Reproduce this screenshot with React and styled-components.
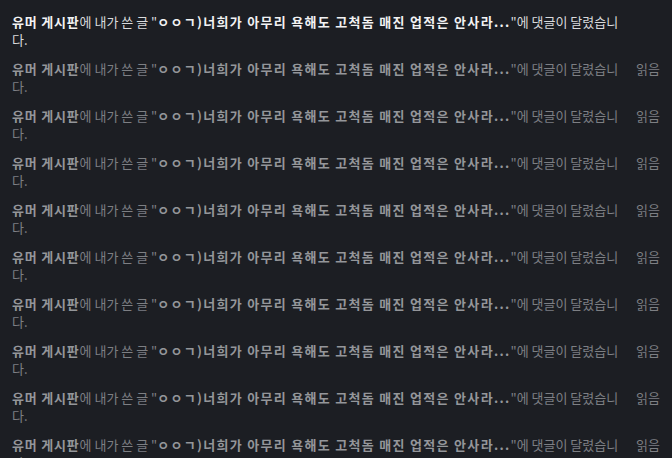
import React from "react";
import styled, { createGlobalStyle } from "styled-components";

const GlobalStyle = createGlobalStyle`
  html, body {
    margin: 0;
    padding: 0;
    background: #1c1e23;
  }
  body {
    font-family: "Noto Sans CJK KR", "Noto Sans", sans-serif;
    font-size: 13px;
  }
`;

const List = styled.ul`
  list-style: none;
  margin: 0;
  padding: 7px 0 0;
  width: 672px;
  height: 458px;
  overflow: hidden;
  box-sizing: border-box;
`;

const Item = styled.li`
  display: grid;
  grid-template-columns: 1fr 26px;
  column-gap: 8px;
  padding: 6px 12px 5px;
  line-height: 18px;
  color: ${({ $read }) => ($read ? "#7d7f83" : "#d9dadc")};
`;

const Message = styled.p`
  margin: 0;
  word-break: break-all;
`;

const Strong = styled.b`
  font-weight: 700;
  letter-spacing: ${({ $wide }) => ($wide ? "1.3px" : "0.8px")};
  color: ${({ $read }) => ($read ? "#94969a" : "#f2f2f3")};
`;

const Status = styled.span`
  color: #7d7f83;
  white-space: nowrap;
  text-align: right;
`;

const notifications = [
  { id: 1, read: false },
  ...Array.from({ length: 9 }, (_, i) => ({ id: i + 2, read: true })),
];

const Notification = ({ read }) => (
  <Item $read={read}>
    <Message>
      <Strong $read={read}>유머 게시판</Strong>에 내가 쓴 글 "
      <Strong $read={read} $wide>
        ㅇㅇㄱ)너희가 아무리 욕해도 고척돔 매진 업적은 안사라...
      </Strong>
      "에 댓글이 달렸습니다.
    </Message>
    <Status>{read ? "읽음" : ""}</Status>
  </Item>
);

const App = () => (
  <>
    <GlobalStyle />
    <List>
      {notifications.map((n) => (
        <Notification key={n.id} read={n.read} />
      ))}
    </List>
  </>
);

export default App;
